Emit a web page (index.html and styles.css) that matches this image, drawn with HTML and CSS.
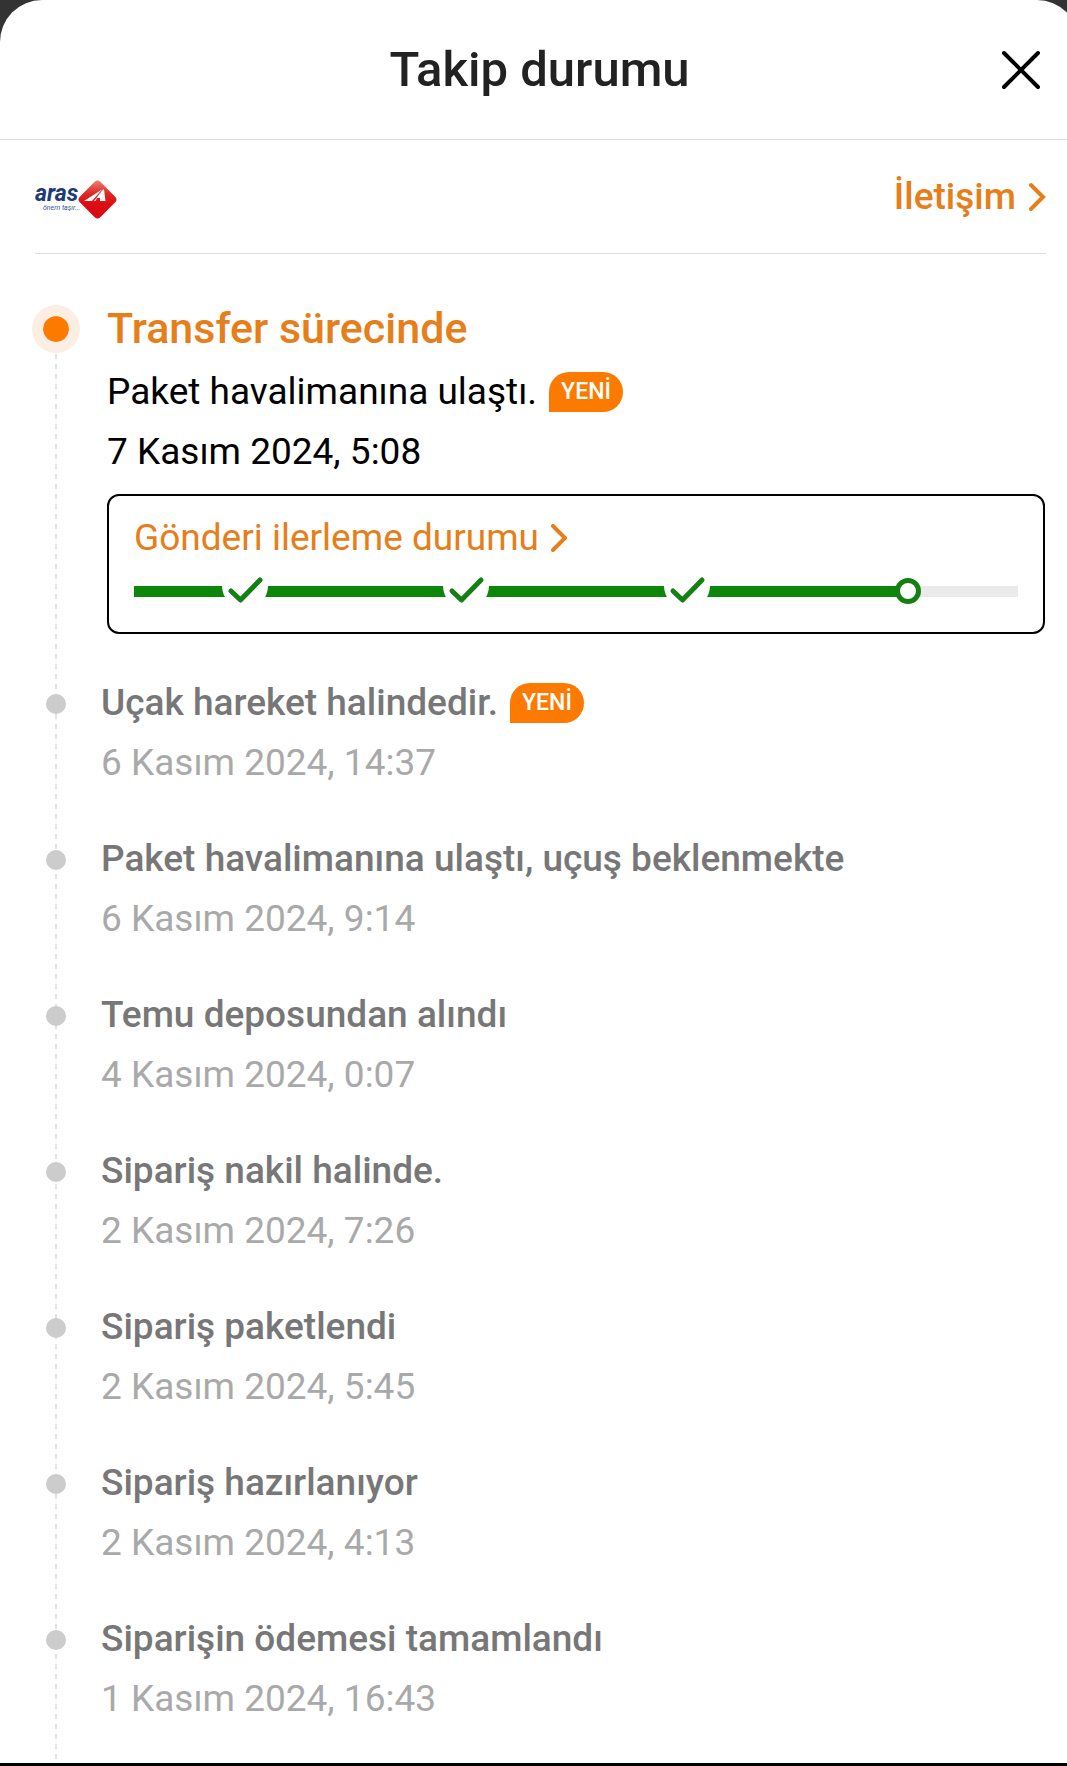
FILE: index.html
```html
<!DOCTYPE html>
<html lang="tr">
<head>
    <meta charset="UTF-8">
    <meta name="viewport" content="width=device-width, initial-scale=1.0">
    <title>Takip durumu</title>
    <link rel="stylesheet" href="styles.css">
</head>
<body>
    <main class="sheet">
        <header class="sheet-header">
            <h1>Takip durumu</h1>
            <button class="close" type="button" aria-label="Kapat">
                <svg width="40" height="40" viewBox="0 0 40 40"><path d="M2 3L36 37M36 3L2 37"/></svg>
            </button>
        </header>

        <div class="carrier">
            <!-- Kargo firması logosu -->
            <svg class="logo" width="84" height="40" viewBox="0 0 84 40" role="img" aria-label="Aras Kargo">
                <defs>
                    <linearGradient id="red" x1="0" y1="0" x2="1" y2="1">
                        <stop offset="0" stop-color="#f08a78"/>
                        <stop offset="0.35" stop-color="#dc2a26"/>
                        <stop offset="0.6" stop-color="#dd0d14"/>
                        <stop offset="1" stop-color="#d80812"/>
                    </linearGradient>
                </defs>
                <text class="logo-name" x="0" y="21">aras</text>
                <text class="logo-slogan" x="8" y="30">önem taşır...</text>
                <rect x="48" y="5" width="29" height="29" rx="4" transform="rotate(45 62.5 19.5)" fill="url(#red)"/>
                <path d="M49 21L67 9.500L57 21ZM59 21L68 9.500H69L70.500 21H65L65 18H62L60.500 21Z" fill="#fff"/>
            </svg>
            <a class="contact" href="#">İletişim
                <svg class="chevron" width="18" height="30" viewBox="0 0 18 30"><path d="M3 3L15 15L3 27"/></svg>
            </a>
        </div>

        <ol class="timeline">
            <li class="event current">
                <span class="marker"></span>
                <div class="event-body">
                    <h2>Transfer sürecinde</h2>
                    <p class="event-title">Paket havalimanına ulaştı. <span class="badge">YENİ</span></p>
                    <time class="event-time" datetime="2024-11-07T05:08">7 Kasım 2024, 5:08</time>
                    <div class="progress">
                        <a class="progress-link" href="#">Gönderi ilerleme durumu
                            <svg class="chevron" width="16" height="28" viewBox="0 0 16 28"><path d="M2 2L14 14L2 26"/></svg>
                        </a>
                        <div class="steps">
                            <span class="step"><svg class="check" width="46" height="46" viewBox="0 0 46 46"><circle cx="23" cy="18" r="23"/><path d="M9 23L18.500 32L38 12"/></svg></span>
                            <span class="step"><svg class="check" width="46" height="46" viewBox="0 0 46 46"><circle cx="23" cy="18" r="23"/><path d="M9 23L18.500 32L38 12"/></svg></span>
                            <span class="step"><svg class="check" width="46" height="46" viewBox="0 0 46 46"><circle cx="23" cy="18" r="23"/><path d="M9 23L18.500 32L38 12"/></svg></span>
                            <span class="step active"><span class="ring"></span></span>
                        </div>
                    </div>
                </div>
            </li>
            <li class="event">
                <span class="marker"></span>
                <div class="event-body">
                    <p class="event-title">Uçak hareket halindedir. <span class="badge">YENİ</span></p>
                    <time class="event-time" datetime="2024-11-06T14:37">6 Kasım 2024, 14:37</time>
                </div>
            </li>
            <li class="event">
                <span class="marker"></span>
                <div class="event-body">
                    <p class="event-title">Paket havalimanına ulaştı, uçuş beklenmekte</p>
                    <time class="event-time" datetime="2024-11-06T09:14">6 Kasım 2024, 9:14</time>
                </div>
            </li>
            <li class="event">
                <span class="marker"></span>
                <div class="event-body">
                    <p class="event-title">Temu deposundan alındı</p>
                    <time class="event-time" datetime="2024-11-04T00:07">4 Kasım 2024, 0:07</time>
                </div>
            </li>
            <li class="event">
                <span class="marker"></span>
                <div class="event-body">
                    <p class="event-title">Sipariş nakil halinde.</p>
                    <time class="event-time" datetime="2024-11-02T07:26">2 Kasım 2024, 7:26</time>
                </div>
            </li>
            <li class="event">
                <span class="marker"></span>
                <div class="event-body">
                    <p class="event-title">Sipariş paketlendi</p>
                    <time class="event-time" datetime="2024-11-02T05:45">2 Kasım 2024, 5:45</time>
                </div>
            </li>
            <li class="event">
                <span class="marker"></span>
                <div class="event-body">
                    <p class="event-title">Sipariş hazırlanıyor</p>
                    <time class="event-time" datetime="2024-11-02T04:13">2 Kasım 2024, 4:13</time>
                </div>
            </li>
            <li class="event">
                <span class="marker"></span>
                <div class="event-body">
                    <p class="event-title">Siparişin ödemesi tamamlandı</p>
                    <time class="event-time" datetime="2024-11-01T16:43">1 Kasım 2024, 16:43</time>
                </div>
            </li>
        </ol>
    </main>
</body>
</html>
```
FILE: styles.css
```css
* {
    box-sizing: border-box;
}
body {
    margin: 0;
    background: #333;
    font-family: Roboto, "Noto Sans", sans-serif;
    font-size: 37px;
    color: #000;
    overflow-x: hidden;
}
h1, h2, p, ol {
    margin: 0;
    padding: 0;
}
a {
    color: #e67e1a;
    text-decoration: none;
}
svg {
    display: block;
    flex: none;
}

/* Panel sağ kenardan biraz taşar */
.sheet {
    display: flex;
    flex-direction: column;
    min-height: 100vh;
    margin-right: -12px;
    background: #fff;
    border-bottom: 3px solid #000;
    border-radius: 42px 42px 0 0;
}
.sheet-header {
    display: grid;
    grid-template-columns: 1fr auto 1fr;
    align-items: center;
    height: 140px;
    padding: 0 37px;
    border-bottom: 1px solid #dedede;
}
.sheet-header h1 {
    grid-column: 2;
    font-size: 49px;
    font-weight: 500;
    color: #222;
}
.close {
    justify-self: end;
    padding: 0;
    border: none;
    background: none;
    cursor: pointer;
}
.close path {
    stroke: #000;
    stroke-width: 4;
    stroke-linecap: round;
}

.carrier {
    display: flex;
    justify-content: space-between;
    align-items: center;
    height: 114px;
    margin: 0 33px 0 35px;
    border-bottom: 1px solid #dedede;
}
.logo {
    margin-top: 6px;
}
.logo-name {
    font-size: 23px;
    font-weight: 700;
    font-style: italic;
    fill: #1c3a7c;
}
.logo-slogan {
    font-size: 7px;
    font-style: italic;
    fill: #3b5592;
}
.contact, .progress-link {
    display: flex;
    align-items: center;
    gap: 12px;
}
.contact {
    font-weight: 500;
}
.chevron path {
    fill: none;
    stroke: #e67e1a;
    stroke-width: 4;
    stroke-linecap: round;
}

/* Noktaların altındaki kesik çizgi */
.timeline {
    flex: 1;
    padding: 40px 34px 0 32px;
    list-style: none;
    background: repeating-linear-gradient(#e2e2e2 0 5px, transparent 5px 10px) 55px 60px / 2px 100% no-repeat;
}
.event {
    display: flex;
    gap: 21px;
    padding-bottom: 36px;
}
.event:last-child {
    padding-bottom: 0;
}
.event.current {
    gap: 27px;
    padding-bottom: 39px;
}
.marker {
    display: flex;
    flex: none;
    justify-content: center;
    align-items: center;
    width: 48px;
    height: 62px;
}
.marker::before {
    content: "";
    width: 20px;
    height: 20px;
    border-radius: 50%;
    background: #ccc;
}
.current .marker {
    height: 70px;
}
.current .marker::before {
    width: 26px;
    height: 26px;
    border: 11px solid #fdeee3;
    background: #fd7a00;
    background-clip: padding-box;
}
.event-body {
    flex: 1;
}
.event-body h2 {
    font-size: 43px;
    font-weight: 500;
    line-height: 68px;
    color: #e67e1a;
}
.event-title {
    display: flex;
    align-items: center;
    gap: 12px;
    line-height: 60px;
    font-weight: 500;
    color: #777;
}
.event-time {
    display: block;
    line-height: 60px;
    color: #a9a9a9;
}
.current .event-title, .current .event-time {
    font-weight: 400;
    color: #000;
}
.badge {
    padding: 0 12px;
    border-radius: 20px 20px 20px 0;
    background: #fd7a00;
    font-size: 23px;
    font-weight: 500;
    line-height: 40px;
    color: #fff;
}

.progress {
    margin-top: 12px;
    padding: 22px 25px 28px;
    border: 2px solid #000;
    border-radius: 12px;
}
.progress-link {
    line-height: 40px;
}
.steps {
    display: flex;
    height: 26px;
    margin-top: 20px;
}
.step {
    display: flex;
    flex: 1;
    justify-content: center;
    align-items: center;
    background: linear-gradient(#0c870a, #0c870a) center / 100% 11px no-repeat;
}
.step.active {
    background: linear-gradient(90deg, #0c870a 50%, #eaeaea 50%) center / 100% 11px no-repeat;
}
.check circle {
    fill: #fff;
}
.check path {
    fill: none;
    stroke: #147f12;
    stroke-width: 5;
    stroke-linecap: round;
    stroke-linejoin: round;
}
.ring {
    width: 26px;
    height: 26px;
    border: 5px solid #147f12;
    border-radius: 50%;
    background: #fff;
}
```
